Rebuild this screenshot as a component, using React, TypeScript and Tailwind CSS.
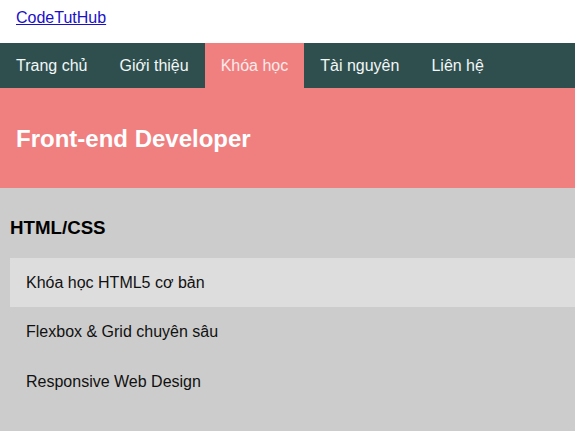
import React from "react";

const navItems = ["Trang chủ", "Giới thiệu", "Khóa học", "Tài nguyên", "Liên hệ"];
const courses = ["Khóa học HTML5 cơ bản", "Flexbox & Grid chuyên sâu", "Responsive Web Design"];

export default function App() {
  return (
    <div className="min-h-[431px] bg-[#cccccc] text-[16px]" style={{ fontFamily: '"Liberation Sans", Arial, sans-serif' }}>
      <header className="bg-white h-[43px] flex items-center px-[16px] pb-[8px]">
        <a href="#" className="text-[#1a10c8] underline leading-[18px]">CodeTutHub</a>
      </header>
      <nav className="bg-[#2f4f4f] flex h-[45px]">
        {navItems.map((item, i) => (
          <a
            key={item}
            href="#"
            className={
              "px-[16px] flex items-center leading-[18px] " +
              (i === 2 ? "bg-[#f08080] text-[#fbeaea]" : "text-[#f2f7f7]")
            }
          >
            {item}
          </a>
        ))}
      </nav>
      <section className="bg-[#f08080] h-[100px] flex items-center px-[16px] pt-[2px]">
        <h1 className="text-white font-bold text-[24px] leading-[28px]">Front-end Developer</h1>
      </section>
      <main className="pl-[10px] pt-[29px]">
        <h3 className="font-bold text-[18.72px] leading-[22px] text-black mb-[19px]">HTML/CSS</h3>
        <ul>
          {courses.map((c, i) => (
            <li
              key={c}
              className={
                "flex items-center pl-[16px] text-[#111] " +
                (i === 0 ? "bg-[#dddddd] h-[49px]" : "h-[50px]")
              }
            >
              {c}
            </li>
          ))}
        </ul>
      </main>
    </div>
  );
}
